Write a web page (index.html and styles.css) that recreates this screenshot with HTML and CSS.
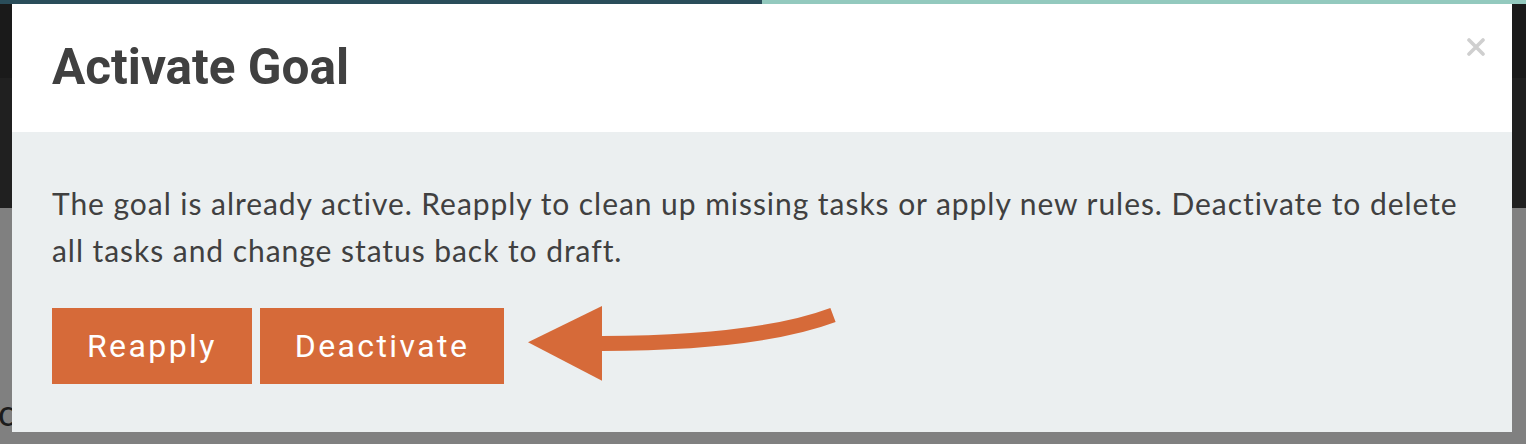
FILE: index.html
```html
<!DOCTYPE html>
<html lang="en">
<head>
    <meta charset="UTF-8">
    <meta name="viewport" content="width=device-width, initial-scale=1.0">
    <title>Activate Goal</title>
    <link rel="stylesheet" href="styles.css">
</head>
<body>
    <div class="progress">
        <div class="progress-done"></div>
        <div class="progress-rest"></div>
    </div>

    <div class="page">
        <div class="page-nav"></div>
        <div class="page-sub"></div>
        <div class="page-main">
            <span class="page-text">c</span>
        </div>
    </div>

    <div class="modal">
        <div class="modal-header">
            <h1>Activate Goal</h1>
            <button class="modal-close" aria-label="Close">
                <svg width="18" height="18" viewBox="0 0 18 18">
                    <path d="M2 2 L16 16 M16 2 L2 16" stroke="#cfcfcf" stroke-width="3.6" stroke-linecap="round"/>
                </svg>
            </button>
        </div>
        <div class="modal-body">
            <p>The goal is already active. Reapply to clean up missing tasks or apply new rules. Deactivate to delete all tasks and change status back to draft.</p>
            <div class="actions">
                <button class="btn">Reapply</button>
                <button class="btn">Deactivate</button>
                <!-- pointer arrow from the annotation -->
                <svg class="pointer" width="310" height="84" viewBox="0 0 310 84">
                    <path d="M74 39.5 Q230 39 305 11" fill="none" stroke="#d66a39" stroke-width="15"/>
                    <polygon points="0,38.3 74,2 74,76.7" fill="#d66a39"/>
                </svg>
            </div>
        </div>
    </div>
</body>
</html>
```

FILE: styles.css
```css
* {
    box-sizing: border-box;
}
body {
    margin: 0;
    width: 1526px;
    height: 444px;
    overflow: hidden;
    position: relative;
    background: #808080;
    font-family: Roboto, "Liberation Sans", sans-serif;
}
.progress {
    display: flex;
    height: 4px;
}
.progress-done {
    width: 762px;
    background: #2a4d5a;
}
.progress-rest {
    flex: 1;
    background: #93c9be;
}
.page-nav {
    height: 74px;
    background: #1a1a1a;
}
.page-sub {
    height: 130px;
    background: #202020;
}
.page-main {
    height: 236px;
    background: #808080;
    padding-top: 186px;
}
.page-text {
    display: block;
    font-family: Lato, sans-serif;
    font-size: 36px;
    line-height: 36px;
    color: #1c1c1c;
    margin-left: -2px;
}
.modal {
    position: absolute;
    top: 4px;
    left: 12px;
    width: 1500px;
    height: 428px;
    display: flex;
    flex-direction: column;
}
.modal-header {
    position: relative;
    height: 128px;
    padding: 35px 40px 0 40px;
    background: #ffffff;
}
.modal-header h1 {
    margin: 0;
    font-size: 49.5px;
    line-height: 56px;
    font-weight: 700;
    color: #404040;
}
.modal-close {
    position: absolute;
    top: 34px;
    right: 27px;
    padding: 0;
    border: none;
    background: none;
    line-height: 0;
}
.modal-body {
    flex: 1;
    padding: 48px 40px 0 40px;
    background: #ebeff0;
}
.modal-body p {
    margin: 0 0 30px 0;
    font-family: Lato, "Open Sans", sans-serif;
    font-size: 30px;
    line-height: 47px;
    letter-spacing: 0.95px;
    color: #404040;
    max-width: 1430px;
}
.actions {
    display: flex;
    align-items: center;
    gap: 8px;
}
.btn {
    height: 76px;
    padding: 0 35px;
    border: none;
    background: #d66a39;
    color: #ffffff;
    font-family: Roboto, sans-serif;
    font-size: 32px;
    font-weight: 400;
    letter-spacing: 2.4px;
}
.pointer {
    margin-left: 16px;
}
```
